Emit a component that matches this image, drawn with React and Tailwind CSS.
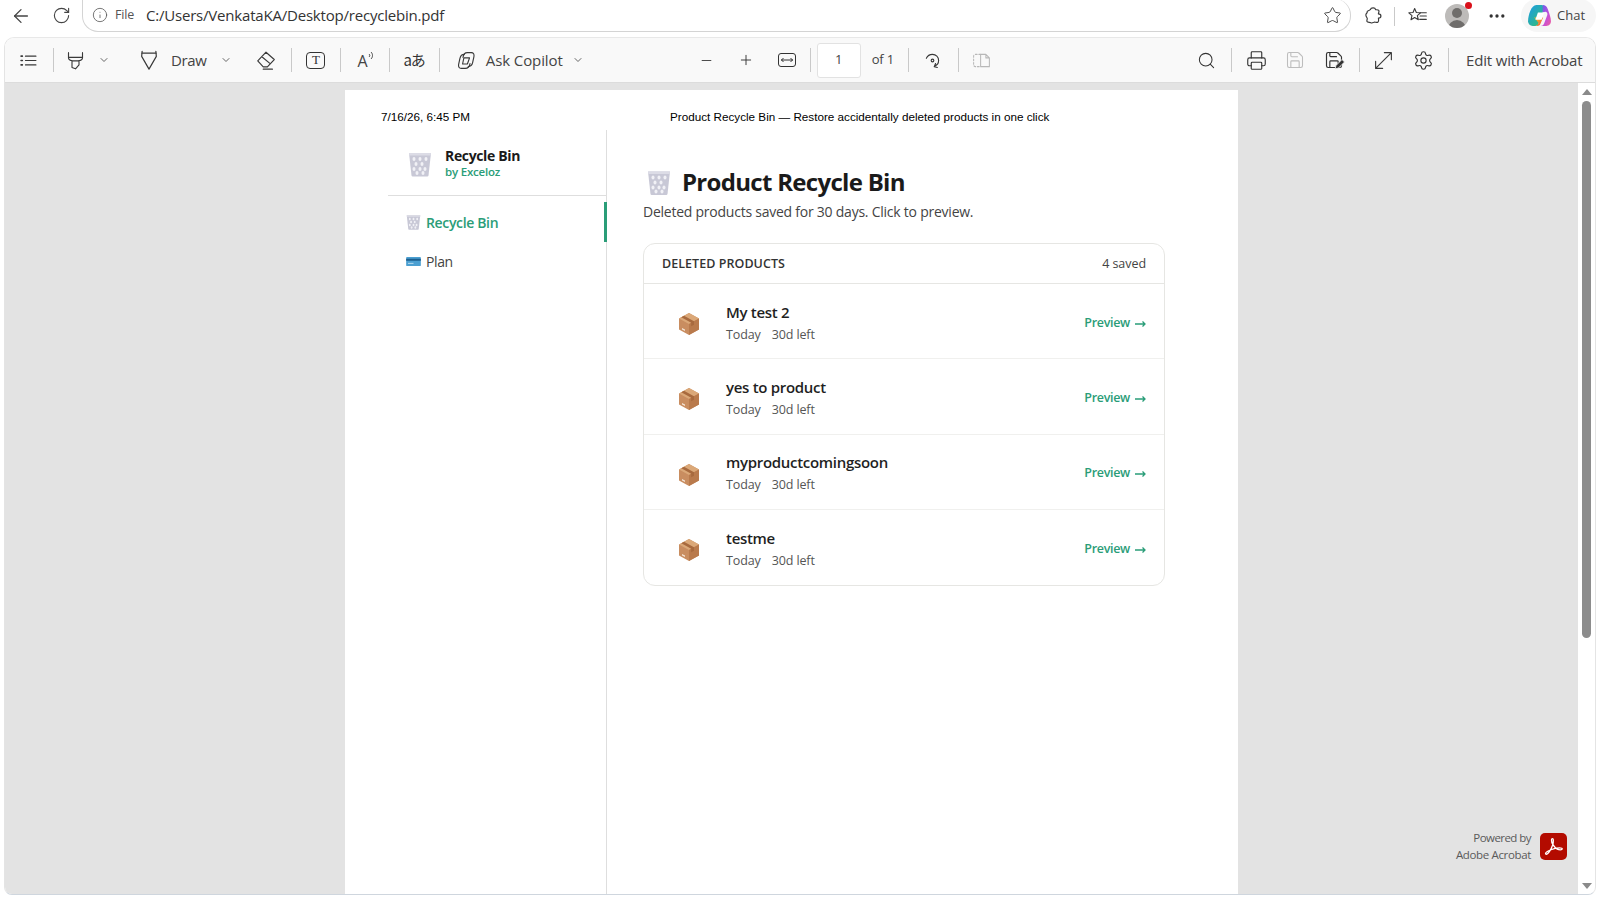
import React from "react";
import { ArrowLeft, RotateCw, Info, Star, Ellipsis, Minus, Plus, Search, Printer, Save, Settings, ChevronDown } from "lucide-react";

const products = ["My test 2", "yes to product", "myproductcomingsoon", "testme"];

const Sep = ({ ml }) => <div className={`h-[24px] w-px bg-[#c9c9c9] shrink-0 ${ml}`} />;

const TrashIcon = ({ className }) => (
  <svg viewBox="0 0 24 26" className={className}>
    <path d="M1 2h22l-2.500 22.500q-.2 1-1.200 1H4.700q-1 0-1.200-1z" fill="#c8c8d6" />
    <path d="M1 2h22l-.3 2.400H1.300z" fill="#dcdce6" />
    {[[6, 8], [12, 8], [18, 8], [8, 13], [14, 13], [6, 18], [12, 18], [17, 18], [9, 22], [15, 22]].map(([x, y], i) => (
      <ellipse key={i} cx={x} cy={y} rx="1.500" ry="2" fill="#f1f1f6" />
    ))}
  </svg>
);

const BoxIcon = () => (
  <svg viewBox="0 0 22 24" className="w-[22px] h-[24px]">
    <path d="M11 1l10 5.500v11L11 23 1 17.500v-11z" fill="#c98d60" />
    <path d="M11 1l10 5.500L11 12 1 6.500z" fill="#dba878" />
    <path d="M11 12l10-5.500v11L11 23z" fill="#b97a4c" />
    <path d="M6 3.800l10 5.500v3.500l-2.800 1.500v-3.600L3.300 5.300z" fill="#a86a3e" />
    <path d="M4 16l3 1.600v1.500l-3-1.600z" fill="#f4e3d3" />
  </svg>
);

const CardIcon = () => (
  <svg viewBox="0 0 16 12" className="w-[15px] h-[11px]">
    <rect x="0" y="1" width="16" height="10" rx="1" fill="#4b9fd1" />
    <rect x="0" y="3" width="16" height="2.200" fill="#1d5f8f" />
    <rect x="2" y="7.500" width="6" height="1" fill="#bfe0f2" />
  </svg>
);

const Stroke = ({ size = 22, vb = 24, color = "#3a3a3a", sw = 1.5, children }) => (
  <svg width={size} height={size} viewBox={`0 0 ${vb} ${vb}`} fill="none" stroke={color} strokeWidth={sw} strokeLinecap="round" strokeLinejoin="round" className="shrink-0">
    {children}
  </svg>
);

const CopilotLogo = () => (
  <svg width="25" height="25" viewBox="0 0 24 24" className="shrink-0">
    <defs>
      <linearGradient id="cpA" x1="0" y1="0" x2="1" y2="1">
        <stop offset="0" stopColor="#1a9be8" />
        <stop offset="1" stopColor="#37c26c" />
      </linearGradient>
      <linearGradient id="cpB" x1="0" y1="0" x2="1" y2="1">
        <stop offset="0" stopColor="#5a5ff0" />
        <stop offset="0.6" stopColor="#c64fd8" />
        <stop offset="1" stopColor="#f0609a" />
      </linearGradient>
      <linearGradient id="cpC" x1="0" y1="0" x2="1" y2="1">
        <stop offset="0" stopColor="#f7c52e" />
        <stop offset="1" stopColor="#f0503c" />
      </linearGradient>
    </defs>
    <path d="M9 2h5c1.500 0 2.300.8 2.800 2L11 20c-.5 1.300-1.500 2-3 2H5.500C2.800 22 1 20 1 17.500 1 12 4 2 9 2z" fill="url(#cpA)" />
    <path d="M15 2c2.500 0 4 1.200 5 4 1.500 4 3 8.500 3 11.500 0 2.500-1.800 4.500-4.500 4.500H13c2 0 3-1 3.500-2.500l3-8c.5-1.500-.5-3-2-3L15 9z" fill="url(#cpB)" />
    <path d="M7 14h8.500l-2.800 6.500c-.5 1-1.300 1.500-2.500 1.500H8c2 0 2.500-1.500 3-3z" fill="url(#cpC)" />
    <path d="M10.500 9h6l-2.500 7H8z" fill="#ffffff" />
  </svg>
);

const AcrobatLogo = () => (
  <div className="w-[27px] h-[27px] rounded-[5px] bg-[#b30b00] flex items-center justify-center shrink-0">
    <svg width="21" height="21" viewBox="0 0 24 24" fill="none" stroke="#ffffff" strokeWidth="1.500" strokeLinejoin="round">
      <path d="M3 20.500c1 1.200 3-.5 5-3.800 2.200-3.600 4-8.500 3.800-12.200-.1-2-2-2-2.100 0-.2 3.500 3.500 9 6.500 10.500 2 1 5.800 1.300 5.800-.3 0-1.600-5-1.400-9-.2-4.500 1.300-11 3.800-10 6z" />
    </svg>
  </div>
);

export default function App() {
  return (
    <div className="h-screen w-full overflow-hidden bg-white flex flex-col text-[#333] font-['Open_Sans',sans-serif]">
      {/* browser bar */}
      <div className="h-[37px] flex shrink-0">
        <div className="ml-[10px] mt-[5px] shrink-0"><ArrowLeft size={22} strokeWidth={1.4} color="#444" /></div>
        <div className="ml-[20px] mt-[6px] shrink-0"><RotateCw size={19} strokeWidth={1.4} color="#444" /></div>
        <div className="ml-[11px] h-[33px] w-[1269px] border-r border-b border-l border-[#d4d4d4] rounded-b-[16px] rounded-r-[16px] flex items-center relative -top-px">
          <div className="ml-[9px]"><Info size={16} strokeWidth={1.2} color="#555" /></div>
          <span className="ml-[7px] text-[12.500px] tracking-[-0.2px] text-[#555]">File</span>
          <span className="ml-[12px] text-[15px] text-[#333] tracking-[-0.2px]">C:/Users/VenkataKA/Desktop/recyclebin.pdf</span>
          <div className="ml-auto mr-[8px]"><Star size={19} strokeWidth={1.2} color="#444" /></div>
        </div>
        <div className="ml-[12px] mt-[6px] shrink-0">
          <Stroke size={20} sw={1.4}>
            <path d="M9 4c.5-2 5.500-2.500 6 0 .2 1.200 3-.3 4 1.500.8 1.500-.7 2.500-.5 4 1 0 3 .6 3 2.500s-2 2.500-3 2.500c0 1.500 1 3.500-.5 4.800-1.500 1.300-3.500-.5-5 .2-1.200.5-2 1.500-3.500.5-1.500-.8-4 0-4.700-1.500-.7-1.500.8-2.500.2-4C4.500 13.500 3 12 3.500 10c.4-1.500 2-1.500 1.500-3-.4-1.500 2.500-1 4-3z" />
          </Stroke>
        </div>
        <div className="ml-[11px] mt-[7px] w-px h-[19px] bg-[#c9c9c9] shrink-0" />
        <div className="ml-[13px] mt-[6px] shrink-0">
          <Stroke size={20} sw={1.3}>
            <path d="M8 3l2 4.800 5 .4-3.800 3.300 1.200 5-4.400-2.700L3.600 16.500l1.200-5L1 8.200l5-.4z" />
            <path d="M15 8h7M14.500 12h7.500M14 16h8" />
          </Stroke>
        </div>
        <div className="ml-[17px] mt-[4px] w-[24px] h-[24px] rounded-full bg-[#bdbbb9] relative overflow-hidden shrink-0">
          <div className="w-[10px] h-[10px] rounded-full bg-[#6f6d6b] mx-auto mt-[4px]" />
          <div className="w-[18px] h-[10px] rounded-t-full bg-[#6f6d6b] mx-auto mt-[2px]" />
        </div>
        <div className="-ml-[4px] mt-[2px] w-[7px] h-[7px] rounded-full bg-[#d9101a] shrink-0 relative" />
        <div className="ml-[15px] mt-[6px] shrink-0"><Ellipsis size={20} color="#333" strokeWidth={2} /></div>
        <div className="ml-[14px] -mt-[1px] h-[33px] w-[75px] rounded-full bg-[#f6f6f6] flex items-center pl-[6px] shrink-0">
          <CopilotLogo />
          <span className="ml-[5px] text-[13px] text-[#444]">Chat</span>
        </div>
      </div>

      {/* viewer */}
      <div className="flex-1 min-h-0 ml-[4px] mr-[4px] mb-[5px] flex flex-col rounded-t-[10px] rounded-b-[8px] overflow-hidden border border-t-[#e8e8e8] border-x-[#e4e4e4] border-b-[#cfd6de]">
        {/* pdf toolbar */}
        <div className="h-[45px] bg-[#f9f9f9] border-b border-[#dcdcdc] flex items-center shrink-0 text-[15px] text-[#444] tracking-[-0.4px]">
          <div className="ml-[13px]">
            <Stroke size={21} sw={1.3}>
              <path d="M8.500 7h12M8.500 12h12M8.500 17h12" />
              <path d="M3.500 7h1.500M3.500 12h1.500M3.500 17h1.500" strokeWidth="1.800" />
            </Stroke>
          </div>
          <Sep ml="ml-[14px]" />
          <div className="ml-[11px]">
            <Stroke size={21} sw={1.3}>
              <path d="M4 3v6c0 2 1 3.500 8 3.500s8-1.500 8-3.500V3M4 8.500h16M8 13v7l4 1.500 4-4.500v-5" />
            </Stroke>
          </div>
          <div className="ml-[12px]"><ChevronDown size={12} color="#666" /></div>
          <div className="ml-[28px]">
            <Stroke size={22} sw={1.3}>
              <path d="M4 4.500h16M4 8l8 14 8-14M4.500 2.500L4 8M19.500 2.500L20 8" />
            </Stroke>
          </div>
          <span className="ml-[11px]">Draw</span>
          <div className="ml-[14px]"><ChevronDown size={12} color="#666" /></div>
          <div className="ml-[23px]">
            <Stroke size={22} sw={1.3}>
              <path d="M3 13l9-9.500 9 8-7.500 8H9zM7.500 8.500l9 7.500M9 22h10" />
            </Stroke>
          </div>
          <Sep ml="ml-[14px]" />
          <div className="ml-[14px] w-[19px] h-[17px] border-[1.4px] border-[#333] rounded-[4px] flex items-center justify-center font-['Liberation_Serif',serif] text-[13px] text-[#333] tracking-normal">T</div>
          <Sep ml="ml-[15px]" />
          <div className="ml-[16px] w-[17px] h-[20px] relative">
            <span className="absolute left-0 top-[-1px] text-[16px] tracking-normal">A</span>
            <svg width="7" height="9" viewBox="0 0 7 9" fill="none" stroke="#444" strokeWidth="1" className="absolute right-[-1px] top-[1px]">
              <path d="M1 6c1-1 1-2 0-3M3 8c2-2 2-5 0-7" />
            </svg>
          </div>
          <Sep ml="ml-[15px]" />
          <span className="ml-[13px] text-[15px] tracking-[-1px] text-[#333] whitespace-nowrap font-['Noto_Sans_CJK_JP',sans-serif]">aあ</span>
          <Sep ml="ml-[14px]" />
          <div className="ml-[16px]">
            <Stroke size={21} sw={1.3}>
              <path d="M8 8.500C8.500 5 10 3 13 3h4.500c2.500 0 3.500 2 3 4.500l-1.500 7c-.7 3-2.500 4.500-5 4.500" />
              <path d="M16 15.500c-.5 3-2.500 5.500-5.500 5.500H6c-2.500 0-3.500-2-3-4.500L4.500 9.500C5.200 6.500 7 5 9.500 5" />
              <path d="M9 9h6.500L13 16H7.500z" />
            </Stroke>
          </div>
          <span className="ml-[9px] whitespace-nowrap tracking-[-0.1px]">Ask Copilot</span>
          <div className="ml-[9px]"><ChevronDown size={12} color="#666" /></div>

          <div className="ml-[115px]"><Minus size={15} strokeWidth={1.4} color="#333" /></div>
          <div className="ml-[24px]"><Plus size={16} strokeWidth={1.4} color="#333" /></div>
          <div className="ml-[24px] w-[18px] h-[14px] border-[1.4px] border-[#333] rounded-[3px] flex items-center justify-center">
            <svg width="12" height="6" viewBox="0 0 12 6" fill="none" stroke="#333" strokeWidth="1"><path d="M0 3h12M2.500 1L.5 3l2 2M9.500 1l2 2-2 2" /></svg>
          </div>
          <Sep ml="ml-[14px]" />
          <div className="ml-[6px] w-[44px] h-[35px] bg-white border border-[#e2e2e2] rounded-[3px] flex items-center justify-center text-[13px] tracking-normal">1</div>
          <span className="ml-[11px] text-[13px] tracking-[-0.2px] whitespace-nowrap">of 1</span>
          <Sep ml="ml-[14px]" />
          <div className="ml-[13px]">
            <Stroke size={21} sw={1.3}>
              <path d="M5 9.500C6.500 6 9 5 12 5c4 0 7 3 7 7 0 3-2 5.500-5 6.500M15.500 15.500l-1.500 3.500 3.500 1" />
              <circle cx="12" cy="12" r="1.500" />
            </Stroke>
          </div>
          <Sep ml="ml-[15px]" />
          <div className="ml-[12px]">
            <Stroke size={21} color="#b8b8b8" sw={1.2}>
              <path d="M11 5H5a2 2 0 00-2 2v10a2 2 0 002 2h6" strokeDasharray="2 2" />
              <path d="M11 5h6l4 4v10h-10zM17 5v4h4" />
            </Stroke>
          </div>

          <div className="ml-[205px]"><Search size={19} strokeWidth={1.3} color="#333" /></div>
          <Sep ml="ml-[15px]" />
          <div className="ml-[14px]"><Printer size={21} strokeWidth={1.3} color="#333" /></div>
          <div className="ml-[18px]"><Save size={20} strokeWidth={1.3} color="#bdbdbd" /></div>
          <div className="ml-[19px] relative">
            <Save size={20} strokeWidth={1.4} color="#333" />
            <svg width="12" height="12" viewBox="0 0 12 12" className="absolute -right-[2px] bottom-0"><path d="M1 11l1-3.500L8 1.500l2.500 2.500L4.500 10z" fill="#333" stroke="#f9f9f9" strokeWidth="0.8" /></svg>
          </div>
          <Sep ml="ml-[15px]" />
          <div className="ml-[13px]">
            <Stroke size={21} sw={1.3}>
              <path d="M3 21L21 3M13 3h8v8M3 13v8h8" />
            </Stroke>
          </div>
          <div className="ml-[19px]"><Settings size={21} strokeWidth={1.3} color="#333" /></div>
          <Sep ml="ml-[14px]" />
          <span className="ml-[17px] whitespace-nowrap tracking-[-0.15px]">Edit with Acrobat</span>
        </div>

        {/* document area */}
        <div className="flex-1 min-h-0 flex bg-[#e3e3e3] relative">
          <div className="flex-1 min-w-0 pl-[340px] pt-[7px]">
            <div className="w-[893px] h-full bg-white flex flex-col">
              <div className="h-[40px] shrink-0 flex pt-[20px] font-['Liberation_Sans',sans-serif] text-[11.700px] leading-[14px] text-black">
                <span className="ml-[36px] w-[289px]">7/16/26, 6:45 PM</span>
                <span>Product Recycle Bin — Restore accidentally deleted products in one click</span>
              </div>
              <div className="flex flex-1 min-h-0 ml-[43px]">
                {/* sidebar */}
                <aside className="w-[219px] shrink-0 border-r border-[#dedede] relative">
                  <div className="h-[66px] border-b border-[#dedede] flex items-center pl-[20px]">
                    <TrashIcon className="w-[24px] h-[26px] mt-[2px]" />
                    <div className="ml-[13px]">
                      <div className="text-[14px] leading-[17px] font-bold text-[#1a1a1a] tracking-[-0.35px]">Recycle Bin</div>
                      <div className="text-[11.500px] leading-[15px] font-semibold text-[#2a9d78] tracking-[-0.2px]">by Exceloz</div>
                    </div>
                  </div>
                  <div className="mt-[6px] h-[40px] relative flex items-center pl-[18px]">
                    <TrashIcon className="w-[15px] h-[16px]" />
                    <span className="ml-[5px] text-[14px] font-semibold text-[#2a9d78] tracking-[-0.35px]">Recycle Bin</span>
                    <div className="absolute right-[-1px] top-0 bottom-0 w-[3px] bg-[#2a9d78]" />
                  </div>
                  <div className="h-[39px] flex items-center pl-[18px]">
                    <CardIcon />
                    <span className="ml-[5px] text-[14px] text-[#444] tracking-[-0.4px]">Plan</span>
                  </div>
                </aside>

                {/* main */}
                <main className="flex-1 min-w-0 pl-[36px]">
                  <div className="flex items-center mt-[35px] h-[34px] pl-[4px]">
                    <TrashIcon className="w-[24px] h-[27px]" />
                    <h1 className="ml-[11px] text-[24px] leading-[32px] font-bold text-[#1a1a1a] tracking-[-0.7px]">Product Recycle Bin</h1>
                  </div>
                  <p className="mt-[3px] text-[14px] leading-[20px] text-[#444] tracking-[-0.24px]">Deleted products saved for 30 days. Click to preview.</p>
                  <div className="mt-[21px] w-[522px] border border-[#e6e6e3] rounded-[12px] overflow-hidden">
                    <div className="h-[40px] flex items-center justify-between pl-[18px] pr-[18px] pt-[2px] border-b border-[#e6e6e3]">
                      <span className="text-[12.500px] font-semibold text-[#333] tracking-[0.05px]">DELETED PRODUCTS</span>
                      <span className="text-[12.500px] text-[#444] tracking-[-0.05px]">4 saved</span>
                    </div>
                    {products.map((name, i) => (
                      <div key={name} className={`h-[75.250px] flex items-center pl-[34px] pr-[18px] ${i < products.length - 1 ? "border-b border-[#f0f0ee]" : ""}`}>
                        <div className="mt-[6px]"><BoxIcon /></div>
                        <div className="ml-[26px] mt-[4px]">
                          <div className="text-[15px] leading-[21px] font-semibold text-[#1f1f1f] tracking-[-0.3px]">{name}</div>
                          <div className="mt-[2px] text-[12.500px] leading-[20px] text-[#555] tracking-[-0.12px] flex gap-[11px]">
                            <span>Today</span>
                            <span>30d left</span>
                          </div>
                        </div>
                        <span className="ml-auto mt-[4px] text-[12.500px] font-semibold text-[#2a9d78] tracking-[-0.3px] flex items-center">
                          Preview
                          <svg width="11" height="8" viewBox="0 0 11 8" fill="none" stroke="#2a9d78" strokeWidth="1.300" className="ml-[5px] mt-[1px]">
                            <path d="M0 4h10M7.500 1.500L10 4 7.500 6.500" />
                          </svg>
                        </span>
                      </div>
                    ))}
                  </div>
                </main>
              </div>
            </div>
          </div>

          {/* powered by */}
          <div className="absolute right-[28px] bottom-[31px] flex items-center">
            <div className="text-right text-[11.500px] leading-[17px] text-[#5a5a5a] tracking-[-0.35px] mr-[9px]">
              <div className="tracking-[-0.55px]">Powered by</div>
              <div>Adobe Acrobat</div>
            </div>
            <AcrobatLogo />
          </div>

          {/* scrollbar */}
          <div className="w-[17px] shrink-0 bg-white flex flex-col items-center pt-[6px] pb-[5px]">
            <div className="w-0 h-0 border-x-[5px] border-x-transparent border-b-[6px] border-b-[#8a8a8a]" />
            <div className="w-[9px] h-[537px] mt-[6px] rounded-full bg-[#8c8c8c]" />
            <div className="mt-auto w-0 h-0 border-x-[5px] border-x-transparent border-t-[6px] border-t-[#8a8a8a]" />
          </div>
        </div>
      </div>
    </div>
  );
}
